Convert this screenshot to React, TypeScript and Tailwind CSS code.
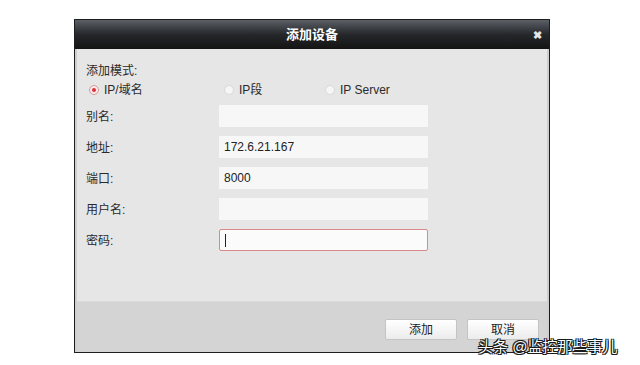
import React from "react";

const font = { fontFamily: '"Liberation Sans", "Noto Sans CJK SC", sans-serif' };

const Radio = ({ checked, label }: { checked?: boolean; label: string }) => (
	<div className="flex items-center gap-[5px]">
		<span
			className={`flex h-[10px] w-[10px] items-center justify-center rounded-full border ${
				checked ? "border-[#d99a9a] bg-[#fbeaea]" : "border-[#d8d8d8] bg-[#f6f6f6]"
			}`}
		>
			{checked && <span className="h-[4px] w-[4px] rounded-full bg-[#d8313a]" />}
		</span>
		<span>{label}</span>
	</div>
);

const Field = ({ label, value, active }: { label: string; value?: string; active?: boolean }) => (
	<div className="flex items-center">
		<span className="w-[142px] pl-[9px] pt-[2px]">{label}:</span>
		<div
			className={`flex h-[22px] w-[209px] items-center px-[5px] ${
				active ? "rounded-[2px] border border-[#d88a8a] bg-[#fbfbfb]" : "bg-[#f7f7f7]"
			}`}
		>
			{active ? <span className="h-[13px] w-px bg-[#222]" /> : <span className="text-[#222]">{value}</span>}
		</div>
	</div>
);

export default function App() {
	return (
		<div className="h-[365px] w-[640px] bg-white pl-[74px] pt-[19px] text-[12px] text-[#2a2a2a]" style={font}>
			<div className="w-[476px] border border-[#1d1d1d] bg-[#1d1d1d]">
				<div className="relative flex h-[29px] items-center justify-center bg-gradient-to-b from-[#5c6168] via-[#25272a] to-[#141414]">
					<span className="text-[13px] font-bold text-white">添加设备</span>
					<span className="absolute right-[7px] top-[7px] text-[11px] font-bold text-[#e6e6e6]">✖</span>
				</div>
				<div className="border-x-2 border-[#cfcfcf] bg-[#e6e6e6]">
					<div className="h-[252px] pt-[13px]">
						<div className="pl-[9px]">添加模式:</div>
						<div className="mt-[1px] flex items-center pl-[12px]">
							<div className="w-[135px]">
								<Radio checked label="IP/域名" />
							</div>
							<div className="w-[101px]">
								<Radio label="IP段" />
							</div>
							<Radio label="IP Server" />
						</div>
						<div className="mt-[6px] flex flex-col gap-[9px]">
							<Field label="别名" />
							<Field label="地址" value="172.6.21.167" />
							<Field label="端口" value="8000" />
							<Field label="用户名" />
							<Field label="密码" active />
						</div>
					</div>
					<div className="flex h-[51px] justify-end gap-[10px] border-t border-[#dadada] bg-[#d4d4d4] pr-[8px] pt-[17px]">
						<button className="h-[21px] w-[72px] rounded-[2px] border border-[#c4c4c4] bg-gradient-to-b from-white to-[#ececec] text-[12px] text-[#222]">
							添加
						</button>
						<button className="h-[21px] w-[72px] rounded-[2px] border border-[#c4c4c4] bg-gradient-to-b from-white to-[#ececec] text-[12px] text-[#222]">
							取消
						</button>
					</div>
				</div>
			</div>
			<div
				className="absolute left-[478px] top-[336px] text-[15px] text-white"
				style={{ textShadow: "0 0 1px #000, 0 0 1px #000, 1px 1px 0 #222, -1px -1px 0 #222, 1px -1px 0 #222, -1px 1px 0 #222" }}
			>
				头条 @监控那些事儿
			</div>
		</div>
	);
}
